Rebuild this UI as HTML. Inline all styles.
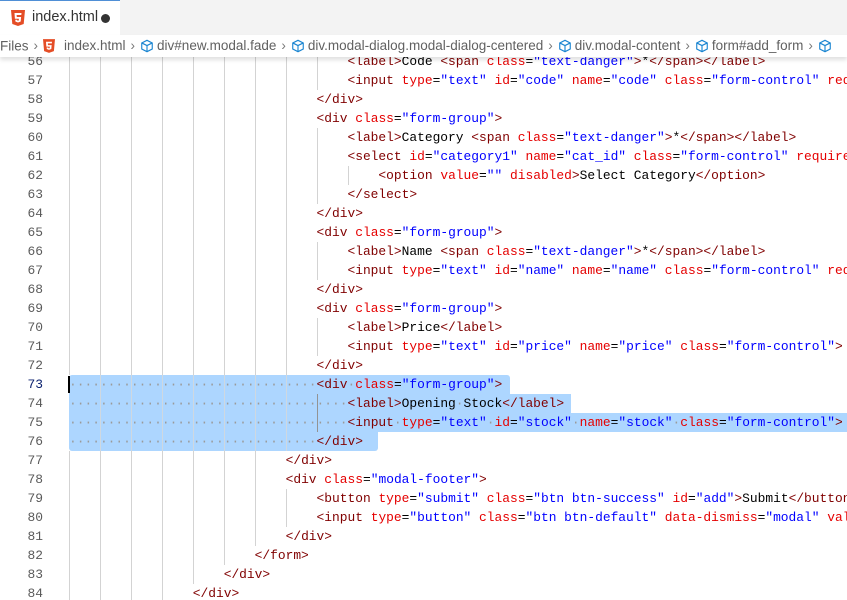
<!DOCTYPE html>
<html><head><meta charset="utf-8"><style>
*{margin:0;padding:0;box-sizing:border-box}
body{width:847px;height:600px;overflow:hidden;background:#fff;position:relative;font-family:"Liberation Sans",sans-serif}
#tabs{position:absolute;left:0;top:0;width:847px;height:35px;background:#f3f3f3}
#tab{position:absolute;left:0;top:0;width:120px;height:35px;background:#fff;border-top:1px solid #4f8fd6;font-size:14px;color:#333}
#crumb{position:absolute;left:0;top:35px;width:847px;height:22px;background:#fff;font-size:13.5px;color:#616161;white-space:nowrap;z-index:5;box-shadow:0 3px 4px rgba(0,0,0,.12);line-height:22px;overflow:hidden}
#crumb span{vertical-align:middle}
.sep{color:#777;margin:0 5px}
.h5{display:inline-block;vertical-align:middle}
#ed{position:absolute;left:0;top:52px;width:847px;height:548px;font-family:"Liberation Mono",monospace;font-size:12.9px;overflow:hidden}
.ln{position:absolute;left:0;height:19px;line-height:19px;width:847px;white-space:pre;overflow:hidden}
.num{position:absolute;left:0;width:43px;text-align:right;color:#5a5a5a}
.num.act{color:#0b216f}
.code{position:absolute;left:69px;top:0;white-space:pre}
.ind{display:inline-block;height:19px;vertical-align:top;background:repeating-linear-gradient(to right,#d3d3d3 0 1px,transparent 1px 31px)}
.t{color:#800000}.a{color:#e50000}.v{color:#0000ff}
.d{color:#9a9a9a}
.sel{position:absolute;left:69px;height:19px;background:#add6ff}
</style></head><body>
<div id="tabs"><div id="tab">
<svg class="h5" style="position:absolute;left:11px;top:9px" width="14" height="16" viewBox="0 0 14 16"><path d="M0 0h14l-1.3 14L7 16 1.3 14z" fill="#e44d26"/><path d="M3.5 3h7l-.2 2H5.6l.2 2h4.3l-.4 4.5L7 12.5l-2.6-1 -.1-1.8h1.8l.1.7 .8.3.8-.3.1-1.6H3.9z" fill="#fff"/></svg>
<span style="position:absolute;left:32px;top:8px;font-size:14.5px">index.html</span>
<span style="position:absolute;left:101px;top:13px;width:9px;height:9px;border-radius:50%;background:#333"></span>
</div></div>
<div id="crumb"><span>Files</span><span class="sep">›</span><svg class="h5" width="12" height="14" viewBox="0 0 14 16"><path d="M0 0h14l-1.3 14L7 16 1.3 14z" fill="#e44d26"/><path d="M3.5 3h7l-.2 2H5.6l.2 2h4.3l-.4 4.5L7 12.5l-2.6-1 -.1-1.8h1.8l.1.7 .8.3.8-.3.1-1.6H3.9z" fill="#fff"/></svg><span style="margin-left:9px">index.html</span><span class="sep">›</span><svg class="h5" width="14" height="14" viewBox="0 0 16 16"><path d="M8 1.5l6 3v7l-6 3-6-3v-7z M2 4.5l6 3 6-3 M8 7.5v7" fill="none" stroke="#1a85d1" stroke-width="1.3"/></svg><span style="margin-left:3px">div#new.modal.fade</span><span class="sep">›</span><svg class="h5" width="14" height="14" viewBox="0 0 16 16"><path d="M8 1.5l6 3v7l-6 3-6-3v-7z M2 4.5l6 3 6-3 M8 7.5v7" fill="none" stroke="#1a85d1" stroke-width="1.3"/></svg><span style="margin-left:3px">div.modal-dialog.modal-dialog-centered</span><span class="sep">›</span><svg class="h5" width="14" height="14" viewBox="0 0 16 16"><path d="M8 1.5l6 3v7l-6 3-6-3v-7z M2 4.5l6 3 6-3 M8 7.5v7" fill="none" stroke="#1a85d1" stroke-width="1.3"/></svg><span style="margin-left:3px">div.modal-content</span><span class="sep">›</span><svg class="h5" width="14" height="14" viewBox="0 0 16 16"><path d="M8 1.5l6 3v7l-6 3-6-3v-7z M2 4.5l6 3 6-3 M8 7.5v7" fill="none" stroke="#1a85d1" stroke-width="1.3"/></svg><span style="margin-left:3px">form#add_form</span><span class="sep">›</span><svg class="h5" width="14" height="14" viewBox="0 0 16 16"><path d="M8 1.5l6 3v7l-6 3-6-3v-7z M2 4.5l6 3 6-3 M8 7.5v7" fill="none" stroke="#1a85d1" stroke-width="1.3"/></svg></div>

<div id="ed">
<div class="sel" style="top:323px;width:441px;border-radius:3px 3px 0 0"></div>
<div class="sel" style="top:342px;width:502px"></div>
<div class="sel" style="top:361px;width:778px"></div>
<div class="sel" style="top:380px;width:309px;border-radius:0 0 3px 3px"></div>

<div class="ln" style="top:0px"><span class="num">56</span><span class="code"><span class="ind" style="width:36ch"></span><span class="t">&lt;label&gt;</span>Code <span class="t">&lt;span</span> <span class="a">class</span>=<span class="v">"text-danger"</span><span class="t">&gt;</span>*<span class="t">&lt;/span&gt;&lt;/label&gt;</span></span></div>
<div class="ln" style="top:19px"><span class="num">57</span><span class="code"><span class="ind" style="width:36ch"></span><span class="t">&lt;input</span> <span class="a">type</span>=<span class="v">"text"</span> <span class="a">id</span>=<span class="v">"code"</span> <span class="a">name</span>=<span class="v">"code"</span> <span class="a">class</span>=<span class="v">"form-control"</span> <span class="a">required</span><span class="t">&gt;</span></span></div>
<div class="ln" style="top:38px"><span class="num">58</span><span class="code"><span class="ind" style="width:32ch"></span><span class="t">&lt;/div&gt;</span></span></div>
<div class="ln" style="top:57px"><span class="num">59</span><span class="code"><span class="ind" style="width:32ch"></span><span class="t">&lt;div</span> <span class="a">class</span>=<span class="v">"form-group"</span><span class="t">&gt;</span></span></div>
<div class="ln" style="top:76px"><span class="num">60</span><span class="code"><span class="ind" style="width:36ch"></span><span class="t">&lt;label&gt;</span>Category <span class="t">&lt;span</span> <span class="a">class</span>=<span class="v">"text-danger"</span><span class="t">&gt;</span>*<span class="t">&lt;/span&gt;&lt;/label&gt;</span></span></div>
<div class="ln" style="top:95px"><span class="num">61</span><span class="code"><span class="ind" style="width:36ch"></span><span class="t">&lt;select</span> <span class="a">id</span>=<span class="v">"category1"</span> <span class="a">name</span>=<span class="v">"cat_id"</span> <span class="a">class</span>=<span class="v">"form-control"</span> <span class="a">required</span><span class="t">&gt;</span></span></div>
<div class="ln" style="top:114px"><span class="num">62</span><span class="code"><span class="ind" style="width:40ch"></span><span class="t">&lt;option</span> <span class="a">value</span>=<span class="v">""</span> <span class="a">disabled</span><span class="t">&gt;</span>Select Category<span class="t">&lt;/option&gt;</span></span></div>
<div class="ln" style="top:133px"><span class="num">63</span><span class="code"><span class="ind" style="width:36ch"></span><span class="t">&lt;/select&gt;</span></span></div>
<div class="ln" style="top:152px"><span class="num">64</span><span class="code"><span class="ind" style="width:32ch"></span><span class="t">&lt;/div&gt;</span></span></div>
<div class="ln" style="top:171px"><span class="num">65</span><span class="code"><span class="ind" style="width:32ch"></span><span class="t">&lt;div</span> <span class="a">class</span>=<span class="v">"form-group"</span><span class="t">&gt;</span></span></div>
<div class="ln" style="top:190px"><span class="num">66</span><span class="code"><span class="ind" style="width:36ch"></span><span class="t">&lt;label&gt;</span>Name <span class="t">&lt;span</span> <span class="a">class</span>=<span class="v">"text-danger"</span><span class="t">&gt;</span>*<span class="t">&lt;/span&gt;&lt;/label&gt;</span></span></div>
<div class="ln" style="top:209px"><span class="num">67</span><span class="code"><span class="ind" style="width:36ch"></span><span class="t">&lt;input</span> <span class="a">type</span>=<span class="v">"text"</span> <span class="a">id</span>=<span class="v">"name"</span> <span class="a">name</span>=<span class="v">"name"</span> <span class="a">class</span>=<span class="v">"form-control"</span> <span class="a">required</span><span class="t">&gt;</span></span></div>
<div class="ln" style="top:228px"><span class="num">68</span><span class="code"><span class="ind" style="width:32ch"></span><span class="t">&lt;/div&gt;</span></span></div>
<div class="ln" style="top:247px"><span class="num">69</span><span class="code"><span class="ind" style="width:32ch"></span><span class="t">&lt;div</span> <span class="a">class</span>=<span class="v">"form-group"</span><span class="t">&gt;</span></span></div>
<div class="ln" style="top:266px"><span class="num">70</span><span class="code"><span class="ind" style="width:36ch"></span><span class="t">&lt;label&gt;</span>Price<span class="t">&lt;/label&gt;</span></span></div>
<div class="ln" style="top:285px"><span class="num">71</span><span class="code"><span class="ind" style="width:36ch"></span><span class="t">&lt;input</span> <span class="a">type</span>=<span class="v">"text"</span> <span class="a">id</span>=<span class="v">"price"</span> <span class="a">name</span>=<span class="v">"price"</span> <span class="a">class</span>=<span class="v">"form-control"</span><span class="t">&gt;</span></span></div>
<div class="ln" style="top:304px"><span class="num">72</span><span class="code"><span class="ind" style="width:32ch"></span><span class="t">&lt;/div&gt;</span></span></div>
<div class="ln" style="top:323px"><span class="num act">73</span><span class="code"><span class="d">································</span><span class="t">&lt;div</span><span class="d">·</span><span class="a">class</span>=<span class="v">"form-group"</span><span class="t">&gt;</span></span><span style="position:absolute;left:68px;top:1px;width:2px;height:17px;background:#000"></span></div>
<div class="ln" style="top:342px"><span class="num">74</span><span class="code"><span class="d">····································</span><span class="t">&lt;label&gt;</span>Opening<span class="d">·</span>Stock<span class="t">&lt;/label&gt;</span></span></div>
<div class="ln" style="top:361px"><span class="num">75</span><span class="code"><span class="d">····································</span><span class="t">&lt;input</span><span class="d">·</span><span class="a">type</span>=<span class="v">"text"</span><span class="d">·</span><span class="a">id</span>=<span class="v">"stock"</span><span class="d">·</span><span class="a">name</span>=<span class="v">"stock"</span><span class="d">·</span><span class="a">class</span>=<span class="v">"form-control"</span><span class="t">&gt;</span></span></div>
<div class="ln" style="top:380px"><span class="num">76</span><span class="code"><span class="d">································</span><span class="t">&lt;/div&gt;</span></span></div>
<div style="position:absolute;left:317px;top:342px;width:1px;height:38px;background:#939393"></div>
<div style="position:absolute;left:100px;top:323px;width:217px;height:76px;background:repeating-linear-gradient(to right,#cfd8e0 0 1px,transparent 1px 31px)"></div>
<div class="ln" style="top:399px"><span class="num">77</span><span class="code"><span class="ind" style="width:28ch"></span><span class="t">&lt;/div&gt;</span></span></div>
<div class="ln" style="top:418px"><span class="num">78</span><span class="code"><span class="ind" style="width:28ch"></span><span class="t">&lt;div</span> <span class="a">class</span>=<span class="v">"modal-footer"</span><span class="t">&gt;</span></span></div>
<div class="ln" style="top:437px"><span class="num">79</span><span class="code"><span class="ind" style="width:32ch"></span><span class="t">&lt;button</span> <span class="a">type</span>=<span class="v">"submit"</span> <span class="a">class</span>=<span class="v">"btn btn-success"</span> <span class="a">id</span>=<span class="v">"add"</span><span class="t">&gt;</span>Submit<span class="t">&lt;/button&gt;</span></span></div>
<div class="ln" style="top:456px"><span class="num">80</span><span class="code"><span class="ind" style="width:32ch"></span><span class="t">&lt;input</span> <span class="a">type</span>=<span class="v">"button"</span> <span class="a">class</span>=<span class="v">"btn btn-default"</span> <span class="a">data-dismiss</span>=<span class="v">"modal"</span> <span class="a">value</span>=<span class="v">"Close"</span><span class="t">&gt;</span></span></div>
<div class="ln" style="top:475px"><span class="num">81</span><span class="code"><span class="ind" style="width:28ch"></span><span class="t">&lt;/div&gt;</span></span></div>
<div class="ln" style="top:494px"><span class="num">82</span><span class="code"><span class="ind" style="width:24ch"></span><span class="t">&lt;/form&gt;</span></span></div>
<div class="ln" style="top:513px"><span class="num">83</span><span class="code"><span class="ind" style="width:20ch"></span><span class="t">&lt;/div&gt;</span></span></div>
<div class="ln" style="top:532px"><span class="num">84</span><span class="code"><span class="ind" style="width:16ch"></span><span class="t">&lt;/div&gt;</span></span></div>
</div>
</body></html>
